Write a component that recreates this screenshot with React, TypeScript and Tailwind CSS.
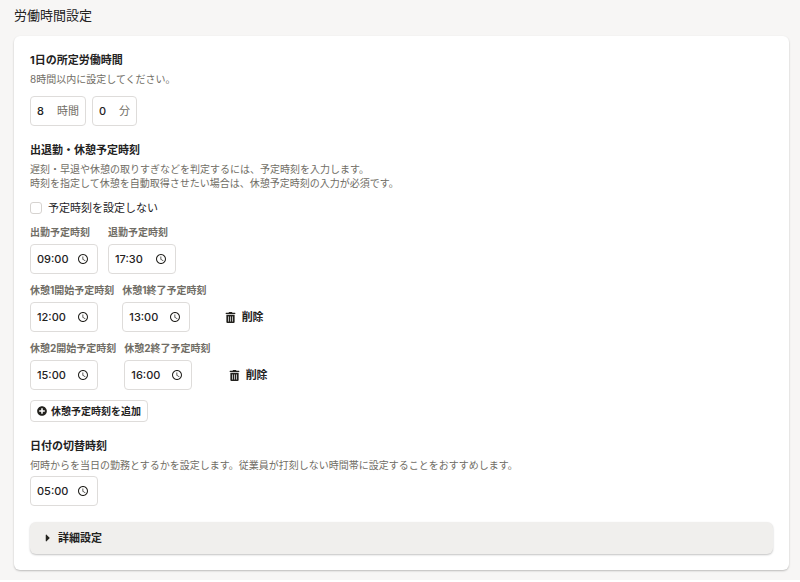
import { useState } from "react";
import { FaCaretRight, FaPlusCircle, FaTrashAlt } from "react-icons/fa";
import { MdAccessTime } from "react-icons/md";

interface BreakTime {
  id: number;
  start: string;
  end: string;
}

const SectionTitle = ({ children }: { children: string }) => (
  <h2 className="text-[11px] leading-4 font-bold">{children}</h2>
);

const UnitInput = ({ label, unit, defaultValue }: { label: string; unit: string; defaultValue: string }) => (
  <label className="flex h-[30px] items-center rounded-[4px] border border-[#dedcda] px-1.5 text-[11px]">
    <input
      type="text"
      inputMode="numeric"
      aria-label={label}
      defaultValue={defaultValue}
      className="w-5 font-medium outline-none"
    />
    <span className="text-[#706d65]">{unit}</span>
  </label>
);

const TimeInput = ({ id, label, defaultValue }: { id: string; label?: string; defaultValue: string }) => (
  <div className="flex h-[30px] w-[68px] items-center rounded-[4px] border border-[#dedcda] pr-2 pl-1.5">
    <input
      id={id}
      type="text"
      aria-label={label}
      defaultValue={defaultValue}
      className="w-full min-w-0 text-[11px] font-medium outline-none"
    />
    <MdAccessTime className="size-3 shrink-0" />
  </div>
);

const TimeField = ({ id, label, defaultValue }: { id: string; label: string; defaultValue: string }) => (
  <div>
    <label htmlFor={id} className="mb-1 block text-[10px] leading-4 font-bold text-[#706d65]">
      {label}
    </label>
    <TimeInput id={id} defaultValue={defaultValue} />
  </div>
);

const App = () => {
  const [breaks, setBreaks] = useState<BreakTime[]>([
    { id: 1, start: "12:00", end: "13:00" },
    { id: 2, start: "15:00", end: "16:00" },
  ]);

  const addBreak = () => {
    const id = Math.max(0, ...breaks.map((b) => b.id)) + 1;
    setBreaks([...breaks, { id, start: "", end: "" }]);
  };

  const removeBreak = (id: number) => {
    setBreaks(breaks.filter((b) => b.id !== id));
  };

  return (
    <main className="bg-[#f7f6f5] pt-1.5 pr-[11px] pb-2.5 pl-3.5 font-['Inter','Noto_Sans_CJK_JP',sans-serif] text-[#23221e]">
      <h1 className="text-[13px] leading-[18px]">労働時間設定</h1>

      <div className="mt-3 rounded-md bg-white p-4 shadow-[0_1px_2px_0_rgba(3,3,2,0.24)]">
        <section>
          <SectionTitle>1日の所定労働時間</SectionTitle>
          <p className="mt-1 text-[10px] leading-[14px] text-[#706d65]">8時間以内に設定してください。</p>
          <div className="mt-2.5 flex gap-1.5">
            <UnitInput label="時間" unit="時間" defaultValue="8" />
            <UnitInput label="分" unit="分" defaultValue="0" />
          </div>
        </section>

        <section className="mt-4">
          <SectionTitle>出退勤・休憩予定時刻</SectionTitle>
          <p className="mt-1 text-[10px] leading-[14px] text-[#706d65]">
            遅刻・早退や休憩の取りすぎなどを判定するには、予定時刻を入力します。
            <br />
            時刻を指定して休憩を自動取得させたい場合は、休憩予定時刻の入力が必須です。
          </p>
          <label className="mt-2.5 flex items-center gap-1.5 text-[11px] leading-4">
            <input
              type="checkbox"
              className="size-3 appearance-none rounded-[3px] border border-[#d6d3d0] checked:bg-[#0077c7]"
            />
            予定時刻を設定しない
          </label>

          <div className="mt-2 flex gap-2.5">
            <TimeField id="work-start" label="出勤予定時刻" defaultValue="09:00" />
            <TimeField id="work-end" label="退勤予定時刻" defaultValue="17:30" />
          </div>

          {breaks.map((b, i) => (
            <div key={b.id} className="mt-2 flex items-end gap-2">
              <TimeField id={`break-start-${b.id}`} label={`休憩${i + 1}開始予定時刻`} defaultValue={b.start} />
              <TimeField id={`break-end-${b.id}`} label={`休憩${i + 1}終了予定時刻`} defaultValue={b.end} />
              <button
                type="button"
                onClick={() => removeBreak(b.id)}
                className="ml-2.5 flex h-[30px] items-center gap-1.5 text-[11px] font-bold"
              >
                <FaTrashAlt className="size-[11px]" />
                削除
              </button>
            </div>
          ))}

          <button
            type="button"
            onClick={addBreak}
            className="mt-2.5 flex h-[22px] items-center gap-1 rounded-[4px] border border-[#dedcda] px-1.5 text-[10px] font-bold"
          >
            <FaPlusCircle className="size-2.5" />
            休憩予定時刻を追加
          </button>
        </section>

        <section className="mt-4">
          <SectionTitle>日付の切替時刻</SectionTitle>
          <p className="mt-1 mb-1 text-[10px] leading-[14px] text-[#706d65]">
            何時からを当日の勤務とするかを設定します。従業員が打刻しない時間帯に設定することをおすすめします。
          </p>
          <TimeInput id="day-switch" label="日付の切替時刻" defaultValue="05:00" />
        </section>

        <button
          type="button"
          className="mt-4 flex h-8 w-full items-center gap-1 rounded-md bg-[#f0efed] px-3 text-[11px] font-bold shadow-[0_1px_2px_0_rgba(3,3,2,0.24)]"
        >
          <FaCaretRight className="size-3" />
          詳細設定
        </button>
      </div>
    </main>
  );
};

export default App;
